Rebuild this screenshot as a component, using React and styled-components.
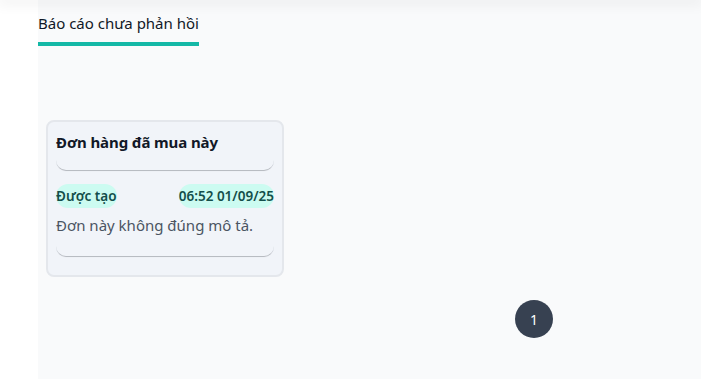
import React from 'react'
import styled, { createGlobalStyle } from 'styled-components'

const GlobalStyle = createGlobalStyle`
body{
  margin:0;
  background:#ffffff;
  font-family:"Noto Sans", "Open Sans", sans-serif;
}
`;

const TopShadow = styled.div`
position:relative;
z-index:2;
height:0;
box-shadow:0 0 14px 3px rgba(0,0,0,0.09);
`;

const Page = styled.div`
display:flex;
height:379px;
`;

const Gutter = styled.div`
width:38px;
flex-shrink:0;
background:#ffffff;
`;

const Main = styled.div`
flex:1;
display:flex;
flex-direction:column;
background:#f9fafb;
`;

const Tabs = styled.div`
display:flex;
padding-top:12px;
`;

const Tab = styled.div`
font-size:15px;
color:#111827;
padding-bottom:8px;
border-bottom:4px solid ${({ $active }) => ($active ? '#14b8a6' : 'transparent')};
line-height:22px;
`;

const CardList = styled.div`
display:flex;
padding:74px 8px 0;
`;

const Card = styled.div`
width:218px;
padding:0 8px 19px;
background:#f1f4f9;
border:2px solid #e4e7ec;
border-radius:8px;
`;

const Section = styled.div`
border-radius:0 0 10px 10px;
box-shadow:0 2px 1px -1px rgba(0,0,0,0.14), 0 1px 0 0 #d3d7de;
`;

const CardTitle = styled.div`
font-size:15px;
font-weight:700;
color:#111827;
line-height:20px;
letter-spacing:-0.1px;
padding:10px 0 18px;
`;

const MetaRow = styled.div`
display:flex;
justify-content:space-between;
margin-top:14px;
`;

const Pill = styled.span`
font-size:13.5px;
font-weight:600;
color:#134e4a;
background:#ccfbf1;
border-radius:12px;
line-height:24px;
height:24px;
`;

const Desc = styled.div`
font-size:15px;
color:#4b5563;
line-height:20px;
padding:7px 0 21px;
`;

const Pager = styled.div`
display:flex;
justify-content:flex-end;
padding:23px 148px 0 0;
`;

const PageButton = styled.div`
width:38px;
height:38px;
border-radius:50%;
background:#374151;
color:#ffffff;
font-size:14px;
display:flex;
align-items:center;
justify-content:center;
`;

const App = () => {
  return (
    <>
      <GlobalStyle />
      <TopShadow />
      <Page>
        <Gutter />
        <Main>
          <Tabs>
            <Tab $active>Báo cáo chưa phản hồi</Tab>
          </Tabs>
          <CardList>
            <Card>
              <Section>
                <CardTitle>Đơn hàng đã mua này</CardTitle>
              </Section>
              <Section>
                <MetaRow>
                  <Pill>Được tạo</Pill>
                  <Pill>06:52 01/09/25</Pill>
                </MetaRow>
                <Desc>Đơn này không đúng mô tả.</Desc>
              </Section>
            </Card>
          </CardList>
          <Pager>
            <PageButton>1</PageButton>
          </Pager>
        </Main>
      </Page>
    </>
  );
};

export default App
